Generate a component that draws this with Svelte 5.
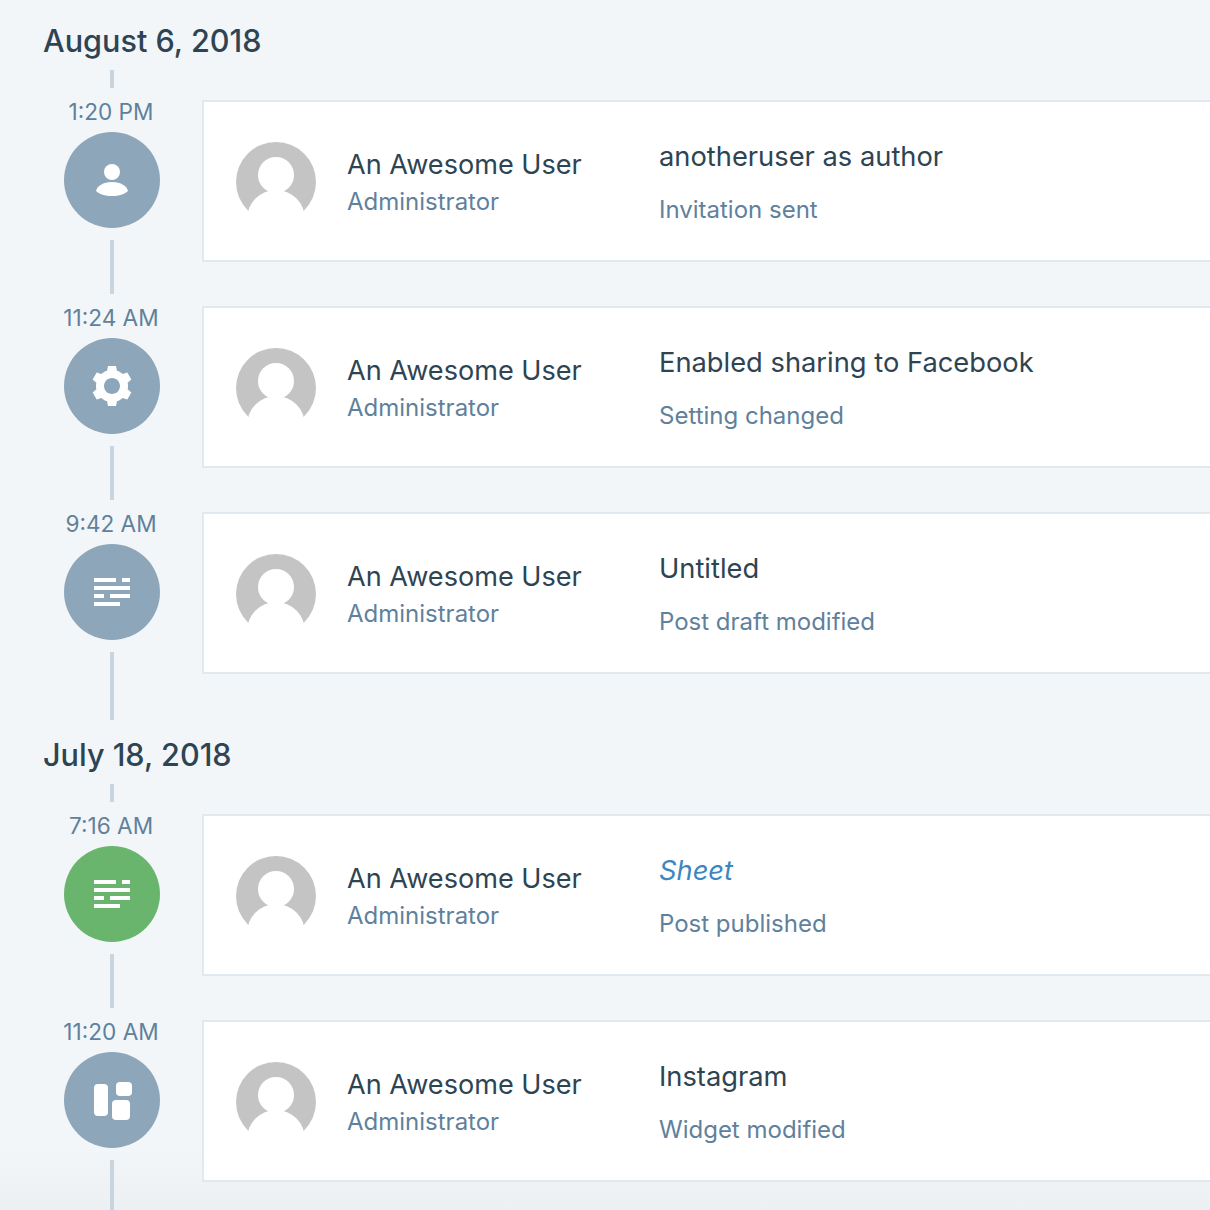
<script>
  const days = [
    {
      date: 'August 6, 2018',
      items: [
        { time: '1:20 PM', icon: 'person', title: 'anotheruser as author', sub: 'Invitation sent' },
        { time: '11:24 AM', icon: 'cog', title: 'Enabled sharing to Facebook', sub: 'Setting changed' },
        { time: '9:42 AM', icon: 'posts', title: 'Untitled', sub: 'Post draft modified' }
      ]
    },
    {
      date: 'July 18, 2018',
      items: [
        { time: '7:16 AM', icon: 'posts', green: true, link: true, title: 'Sheet', sub: 'Post published' },
        { time: '11:20 AM', icon: 'widget', title: 'Instagram', sub: 'Widget modified' }
      ]
    }
  ];
</script>

<div class="page">
  {#each days as day}
    <section class="day">
      <h2>{day.date}</h2>
      <div class="stub"></div>
      {#each day.items as item}
        <div class="row">
          <div class="rail">
            <div class="time">{item.time}</div>
            <div class="circle" class:green={item.green}>
              <svg width="48" height="48" viewBox="0 0 48 48" fill="#fff">
                {#if item.icon === 'person'}
                  <circle cx="24" cy="16" r="8" />
                  <path d="M8 35C9 30 15 26 24 26s15 4 16 9c-3 3-9 5-16 5S11 38 8 35z" />
                {:else if item.icon === 'cog'}
                  <path transform="scale(2)" d="M20 12c0-.568-.06-1.122-.174-1.656l1.834-1.612-2-3.464-2.322.786c-.82-.736-1.787-1.308-2.86-1.657L14 2h-4l-.48 2.396c-1.07.35-2.04.92-2.858 1.657L4.34 5.268l-2 3.464 1.834 1.612C4.06 10.878 4 11.432 4 12s.06 1.122.174 1.656L2.34 15.268l2 3.464 2.322-.786c.82.736 1.787 1.308 2.86 1.657L10 22h4l.48-2.396c1.07-.35 2.04-.92 2.858-1.657l2.322.786 2-3.464-1.834-1.612c.113-.535.174-1.09.174-1.657zm-8 4c-2.21 0-4-1.79-4-4s1.79-4 4-4 4 1.79 4 4-1.79 4-4 4z" />
                {:else if item.icon === 'posts'}
                  <rect x="6" y="10" width="22" height="4" />
                  <rect x="34" y="10" width="8" height="4" />
                  <rect x="6" y="18" width="36" height="4" />
                  <rect x="6" y="26" width="10" height="4" />
                  <rect x="22" y="26" width="20" height="4" />
                  <rect x="6" y="34" width="26" height="4" />
                {:else}
                  <rect x="6" y="8" width="14" height="32" rx="4" />
                  <rect x="28" y="6" width="16" height="14" rx="4" />
                  <rect x="24" y="24" width="18" height="20" rx="4" />
                {/if}
              </svg>
            </div>
            <div class="line"></div>
          </div>
          <div class="card">
            <svg class="avatar" width="80" height="80" viewBox="0 0 80 80">
              <circle cx="40" cy="40" r="40" fill="#c4c4c4" />
              <circle cx="40" cy="33" r="18" fill="#fff" />
              <circle cx="40" cy="77" r="29" fill="#fff" />
            </svg>
            <div class="who">
              <div class="name">An Awesome User</div>
              <div class="role">Administrator</div>
            </div>
            <div class="what">
              <div class="title" class:link={item.link}>{item.title}</div>
              <div class="sub">{item.sub}</div>
            </div>
          </div>
        </div>
      {/each}
    </section>
  {/each}
</div>

<style>
  :global(body) {
    background: #f3f6f8;
    overflow: hidden;
  }
  .page {
    height: 1210px;
    overflow: hidden;
    padding: 21px 0 0 44px;
    box-sizing: border-box;
    background: linear-gradient(#f3f6f8, #ecf0f3) bottom / 100% 60px no-repeat;
    font-family: Inter, "Noto Sans", sans-serif;
    color: #2e4453;
  }
  .day + .day {
    padding-top: 15px;
  }
  h2 {
    margin: 0 0 9px -1px;
    font-size: 30.6px;
    font-weight: 500;
    line-height: 40px;
    color: #2e4453;
  }
  .stub {
    width: 4px;
    height: 18px;
    margin: 0 0 8px 66px;
    background: #c8d5df;
  }
  .row {
    display: flex;
    gap: 22px;
  }
  .rail {
    width: 136px;
    flex: none;
    display: flex;
    flex-direction: column;
    align-items: center;
  }
  .time {
    height: 36px;
    line-height: 32px;
    margin-right: 2px;
    font-size: 22.6px;
    color: #5f819c;
  }
  .circle {
    width: 96px;
    height: 96px;
    border-radius: 50%;
    background: #8da6ba;
    display: flex;
    align-items: center;
    justify-content: center;
  }
  .circle.green {
    background: #69b56d;
  }
  .line {
    width: 4px;
    height: 54px;
    margin: 12px 0 8px;
    background: #c8d5df;
  }
  .row:last-child .line {
    height: 68px;
    margin-bottom: 0;
  }
  .card {
    flex: 1;
    height: 162px;
    margin-top: 4px;
    box-sizing: border-box;
    border: 2px solid #e1e8ee;
    border-right: none;
    background: #fff;
    display: flex;
    align-items: center;
    padding: 2px 0 0 32px;
  }
  .avatar {
    flex: none;
    margin-right: 31px;
  }
  .who {
    width: 312px;
    flex: none;
    margin-top: 1px;
  }
  .name {
    font-size: 27.1px;
    line-height: 37px;
  }
  .role {
    font-size: 24px;
    line-height: 37px;
    color: #5f819c;
  }
  .what {
    margin-top: 3px;
  }
  .title {
    font-size: 27.3px;
    line-height: 36px;
    margin-bottom: 17px;
  }
  .title.link {
    color: #3d86bf;
    font-style: italic;
  }
  .sub {
    font-size: 24px;
    line-height: 36px;
    color: #5f819c;
  }
</style>
